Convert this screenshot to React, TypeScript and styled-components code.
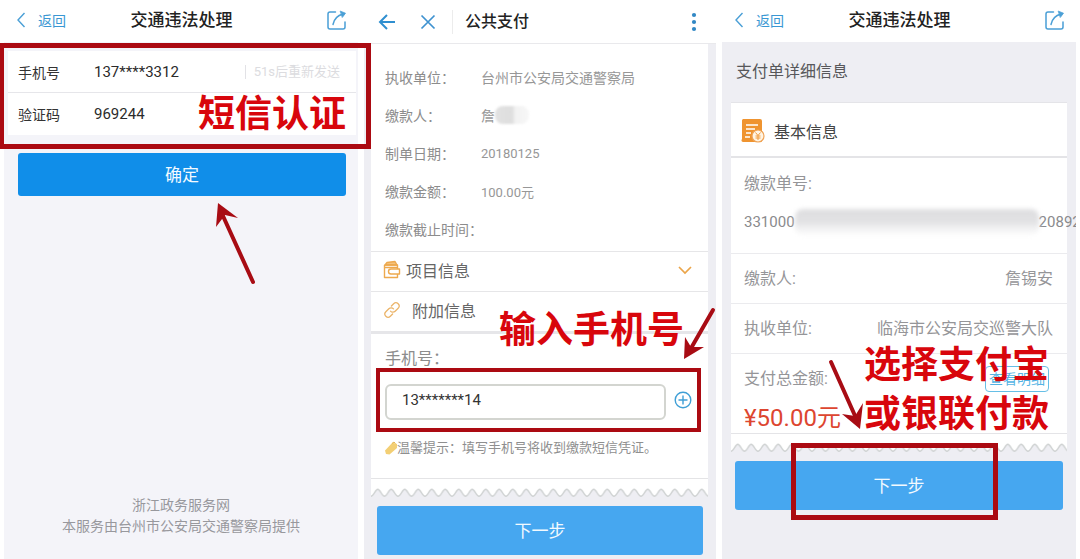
import React from "react";
import styled, { createGlobalStyle } from "styled-components";

const Global = createGlobalStyle`
  *, *::before, *::after { box-sizing: border-box; }
  body {
    margin: 0;
    background: #fff;
    color: #333;
    font-family: Roboto, "Noto Sans CJK SC", sans-serif;
    font-size: 14px;
    overflow-x: hidden;
  }
  button, input { font: inherit; }
  h1, h2, p, dl, dd { margin: 0; font-weight: 400; }
`;

const Page = styled.main`
  display: grid;
  grid-template-columns: minmax(0, 354fr) minmax(0, 352fr) minmax(0, 354fr);
  gap: 6px;
  min-height: 100vh;
  padding: 0 4px;
`;

const Panel = styled.section<{ $bg: string; $clip?: boolean }>`
  position: relative;
  display: flex;
  flex-direction: column;
  background: ${(p) => p.$bg};
  overflow: ${(p) => (p.$clip ? "hidden" : "visible")};
`;

/* Title bars */
const TitleBar = styled.header`
  display: grid;
  grid-template-columns: 1fr auto 1fr;
  align-items: center;
  height: 42px;
  padding: 0 11px 2px 12px;
  background: #fff;
`;

const BarTitle = styled.h1`
  font-size: 17px;
  line-height: 24px;
  font-weight: 500;
  color: #222;
`;

const BackLink = styled.a`
  display: flex;
  align-items: center;
  gap: 10px;
  font-size: 14px;
  color: #3a97d3;
  text-decoration: none;
`;

const IconButton = styled.button`
  display: flex;
  justify-self: end;
  padding: 0;
  border: 0;
  background: none;
  color: #4a9fd6;
`;

const PayBar = styled.header`
  display: flex;
  align-items: center;
  height: 44px;
  padding: 0 18px 0 14px;
  background: #fff;
  border-bottom: 1px solid #e9e9ec;
`;

const PayTitle = styled.h1`
  flex: 1;
  margin-left: 16px;
  padding-left: 12px;
  border-left: 1px solid #ececec;
  font-size: 16px;
  line-height: 24px;
  font-weight: 500;
  color: #222;
`;

const CloseButton = styled(IconButton)`
  margin-left: 24px;
`;

/* SMS form */
const SmsForm = styled.form`
  display: flex;
  flex-direction: column;
  padding-top: 9px;
`;

const FormRow = styled.div<{ $line?: boolean }>`
  display: flex;
  align-items: center;
  height: 42px;
  margin: 0 2px 0 4px;
  padding-left: 10px;
  background: #fff;
  border-bottom: 1px solid ${(p) => (p.$line ? "#e6e6ea" : "#fff")};
`;

const RowLabel = styled.label`
  width: 76px;
  color: #333;
`;

const RowInput = styled.input`
  flex: 1;
  min-width: 0;
  padding: 0;
  border: 0;
  outline: 0;
  background: transparent;
  font-size: 15px;
  color: #2b2b2b;
`;

const Resend = styled.button`
  height: 14px;
  padding: 0 16px 0 8px;
  border: 0;
  border-left: 1px solid #e2e2e6;
  background: none;
  font-size: 13px;
  line-height: 14px;
  color: #dcdce0;
`;

const MainButton = styled.button`
  height: 49px;
  margin: 8px 13px 0;
  padding: 0 0 3px;
  border: 0;
  border-radius: 3px;
  background: #46a7f0;
  font-size: 17px;
  color: #f2faff;
`;

const ConfirmButton = styled(MainButton)`
  height: 43px;
  margin: 18px 12px 0 14px;
  background: #108ee9;
`;

const Footer = styled.footer`
  margin-top: auto;
  padding-bottom: 22px;
  text-align: center;
  line-height: 21px;
  color: #98989d;
`;

/* Payment panel */
const Sheet = styled.div`
  display: flex;
  flex-direction: column;
  margin: 0 8px 0 7px;
  background: #fff;
`;

const Facts = styled.dl`
  padding: 14px 0 3px 14px;
  color: #979797;
`;

const Fact = styled.div`
  display: flex;
  align-items: center;
  height: 38px;
`;

const FactLabel = styled.dt`
  width: 96px;
  white-space: nowrap;
  color: #8c8c8c;
`;

const FactValue = styled.dd<{ $digits?: boolean }>`
  display: flex;
  align-items: center;
  font-size: ${(p) => (p.$digits ? 13 : 14)}px;
`;

const Smudge = styled.span`
  width: 34px;
  height: 18px;
  border-radius: 8px;
  background: linear-gradient(90deg, #e2e2e2, #dedede 50%, #f2f2f2 60%, #f7f7f7);
  filter: blur(1px);
`;

const LongSmudge = styled.span`
  flex: none;
  width: 244px;
  height: 26px;
  border-radius: 8px;
  background: linear-gradient(180deg, #dedee0, #e2e2e4 50%, #f2f2f3 75%, #fbfbfb);
  filter: blur(2px);
`;

const SectionRow = styled.h2<{ $gap: number }>`
  display: flex;
  align-items: center;
  gap: ${(p) => p.$gap}px;
  height: 40px;
  padding: 0 15px 4px 12px;
  border-top: 1px solid #e6e6e8;
  font-size: 16px;
  color: #666;
`;

const Toggle = styled(IconButton)`
  margin-left: auto;
  color: #eba54a;
`;

const PhoneField = styled.div`
  padding: 14px 16px 20px 14px;
  border-top: 3px solid #e6e6e9;
  border-bottom: 1px solid #e4e4e6;
`;

const PhoneLabel = styled.label`
  display: block;
  font-size: 16px;
  line-height: 22px;
  color: #8c8c8c;
`;

const PhoneLine = styled.div`
  display: flex;
  align-items: center;
  gap: 8px;
  margin-top: 14px;
`;

const PhoneInput = styled.input`
  flex: 1;
  min-width: 0;
  height: 36px;
  padding: 0 15px 4px;
  border: 2px solid #d3d5d0;
  border-radius: 6px;
  outline: 0;
  background: #fff;
  font-size: 15px;
  color: #333;
`;

const AddButton = styled(IconButton)`
  padding-bottom: 4px;
`;

const Hint = styled.p`
  display: flex;
  align-items: center;
  margin-top: 18px;
  font-size: 13px;
  line-height: 20px;
  white-space: nowrap;
  color: #8f8f8f;
`;

const WaveGap = styled.div`
  height: 9px;
  background: #fff;
`;

const WaveEdge = styled.div<{ $margin: string }>`
  height: 10px;
  margin: ${(p) => p.$margin};
`;

const WaveBox = styled.svg`
  display: block;
  width: 100%;
  height: 10px;
`;

/* Bill panel */
const BillHeading = styled.h2`
  padding-left: 14px;
  font-size: 16px;
  line-height: 60px;
  color: #57575a;
`;

const BillCard = styled.div`
  display: flex;
  flex-direction: column;
  margin: 0 9px;
  background: #fff;
  border-top: 1px solid #e4e4e8;
`;

const CardHead = styled.h2`
  display: flex;
  align-items: center;
  gap: 9px;
  height: 55px;
  padding: 2px 10px 0;
  border-bottom: 2px solid #e4e4e7;
  font-size: 16px;
  color: #444;
`;

const BillItem = styled.div`
  display: flex;
  justify-content: space-between;
  align-items: center;
  height: 50px;
  padding: 0 14px 4px 13px;
  border-bottom: 1px solid #ebebee;
  font-size: 16px;
  white-space: nowrap;
  color: #959598;
`;

const NumberItem = styled.div`
  padding: 12px 0 17px 13px;
  border-bottom: 1px solid #ebebee;
  color: #959598;
`;

const NumberLabel = styled.div`
  font-size: 16px;
  line-height: 28px;
`;

const NumberValue = styled.div`
  display: flex;
  align-items: center;
  height: 28px;
  margin-top: 10px;
  font-size: 15px;
  color: #8a8a8d;
`;

const TotalItem = styled.div`
  padding: 0 18px 0 13px;
  border-bottom: 1px solid #e4e4e7;
  color: #959598;
`;

const TotalLine = styled.div`
  display: flex;
  justify-content: space-between;
  align-items: center;
  height: 49px;
  padding-bottom: 3px;
  font-size: 16px;
`;

const Amount = styled.div`
  font-size: 24px;
  line-height: 30px;
  color: #dd4630;
`;

const DetailButton = styled.button`
  height: 26px;
  margin-top: 4px;
  padding: 0 3px;
  border: 1px solid #66bfe6;
  border-radius: 4px;
  background: #fff;
  font-size: 14px;
  line-height: 20px;
  color: #55b4e4;
`;

/* Red marks drawn over the screens */
const Frame = styled.div<{ $top: number; $height: number; $left: string; $right: string; $line: number }>`
  position: absolute;
  z-index: 2;
  top: ${(p) => p.$top}px;
  left: ${(p) => p.$left};
  right: ${(p) => p.$right};
  height: ${(p) => p.$height}px;
  border: ${(p) => p.$line}px solid #ab0a12;
  pointer-events: none;
`;

const Note = styled.p<{ $top: number; $right: number }>`
  position: absolute;
  z-index: 2;
  top: ${(p) => p.$top}px;
  right: ${(p) => p.$right}px;
  font-size: 37px;
  line-height: 49px;
  font-weight: 700;
  white-space: nowrap;
  color: #d8060c;
  pointer-events: none;
`;

const ArrowBox = styled.svg<{ $top: number; $right: number }>`
  position: absolute;
  z-index: 3;
  top: ${(p) => p.$top}px;
  right: ${(p) => p.$right}px;
  overflow: visible;
  pointer-events: none;
`;

const BackIcon = () => (
  <svg width="12" height="16" viewBox="0 0 12 16" fill="none" stroke="#4a9fd6" strokeWidth="1.4">
    <path d="M8.500 1 2 8l6.500 7" />
  </svg>
);

const ShareIcon = () => (
  <svg width="20" height="20" viewBox="0 0 20 20" fill="none" stroke="currentColor" strokeWidth="1.500" strokeLinecap="round" strokeLinejoin="round">
    <path d="M8.500 2H3a2 2 0 0 0-2 2v13a2 2 0 0 0 2 2h13a2 2 0 0 0 2-2v-5" />
    <path d="M6 14.500C7 9 10.500 5.500 16 4" />
    <path d="M13.500 1.200 18.500 3.200 15.500 7.200Z" fill="currentColor" strokeWidth=".8" />
  </svg>
);

const WalletIcon = () => (
  <svg width="18" height="20" viewBox="0 0 18 20" fill="none" stroke="#eda94e" strokeWidth="1.400" strokeLinejoin="round">
    <path d="M2 5 4 2.500 12 1.500l2 3.500Z" fill="#f5c27c" />
    <path d="M1.500 5h13v4M14.500 14v3.500h-13V5M1.500 7.500h13" />
    <path d="M16.500 9H8a2.500 2.500 0 0 0 0 5h8.500z" fill="#fff" />
  </svg>
);

const LinkIcon = () => (
  <svg width="18" height="18" viewBox="0 0 24 24" fill="none" stroke="#ebb469" strokeWidth="1.700" strokeLinecap="round">
    <path d="M10 13.500a4.200 4.200 0 0 0 6.200.2l4-4a4.200 4.200 0 0 0-6-6l-3 3" />
    <path d="M14 10.500a4.200 4.200 0 0 0-6.200-.2l-4 4a4.200 4.200 0 0 0 6 6l3-3" />
  </svg>
);

const TicketIcon = () => (
  <svg width="12" height="14" viewBox="0 0 12 14">
    <path d="M0 9.500 7.500 1.500 12 3v4L4.500 13.500 1 13Z" fill="#f3cf74" />
    <path d="M7 2.500 9 1l1.500 1.500" fill="none" stroke="#e6b653" />
  </svg>
);

const BillIcon = () => (
  <svg width="24" height="24" viewBox="0 0 24 24">
    <path d="M2 0h17a2 2 0 0 1 2 2v20a1 1 0 0 1-1 1H2a2 2 0 0 1-1-3V2a2 2 0 0 1 1-2Z" fill="#ef9430" />
    <path d="M5 6h12M5 10h9M5 14h5M4 18h5" stroke="#fff" strokeWidth="1.400" />
    <circle cx="17" cy="17" r="6" fill="#fff4e4" stroke="#efa355" strokeWidth="1.200" />
    <path d="m14.500 13.500 2.500 3 2.500-3M17 16.500V21M14.500 17h5M14.500 19h5" fill="none" stroke="#ef9a3c" />
  </svg>
);

const Wave = ({ id, margin }: { id: string; margin: string }) => (
  <WaveEdge $margin={margin}>
    <WaveBox aria-hidden="true">
      <defs>
        <pattern id={id} width="13.500" height="10" patternUnits="userSpaceOnUse">
          <path d="M0 0H13.500V8.200C11 8.200 9 1.200 6.750 1.200S2.500 8.200 0 8.200Z" fill="#fff" />
          <path d="M-1 8.200H0C2.500 8.200 4.500 1.200 6.750 1.200S11 8.200 13.500 8.200h1" fill="none" stroke="#cfd2d2" strokeWidth="1.400" />
        </pattern>
      </defs>
      <rect width="100%" height="10" fill={`url(#${id})`} />
    </WaveBox>
  </WaveEdge>
);

const SubPageBar = () => (
  <TitleBar>
    <BackLink href="#back">
      <BackIcon />
      返回
    </BackLink>
    <BarTitle>交通违法处理</BarTitle>
    <IconButton type="button" aria-label="分享">
      <ShareIcon />
    </IconButton>
  </TitleBar>
);

const SmsPanel = () => (
  <Panel $bg="#f4f4f9">
    <SubPageBar />
    <SmsForm>
      <FormRow $line>
        <RowLabel htmlFor="sms-phone">手机号</RowLabel>
        <RowInput id="sms-phone" defaultValue="137****3312" />
        <Resend type="button">51s后重新发送</Resend>
      </FormRow>
      <FormRow>
        <RowLabel htmlFor="sms-code">验证码</RowLabel>
        <RowInput id="sms-code" defaultValue="969244" />
      </FormRow>
      <ConfirmButton type="button">确定</ConfirmButton>
    </SmsForm>
    <Footer>
      <p>浙江政务服务网</p>
      <p>本服务由台州市公安局交通警察局提供</p>
    </Footer>
    <Frame $top={43} $height={106} $left="-5px" $right="-13px" $line={5} />
    <Note $top={90} $right={12}>短信认证</Note>
    <ArrowBox $top={203} $right={103} width="40" height="82" viewBox="0 0 40 82">
      <path d="M8 13 38 79" stroke="#a80c14" strokeWidth="4" strokeLinecap="round" />
      <path d="M3 0 23 15 10 12 1 24Z" fill="#a80c14" />
    </ArrowBox>
  </Panel>
);

const PayPanel = () => (
  <Panel $bg="#eeeef3">
    <PayBar>
      <IconButton type="button" aria-label="后退">
        <svg width="18" height="16" viewBox="0 0 18 16" fill="none" stroke="#2f8fd0" strokeWidth="2">
          <path d="M17 8H2M9 1 2 8l7 7" />
        </svg>
      </IconButton>
      <CloseButton type="button" aria-label="关闭">
        <svg width="16" height="16" viewBox="0 0 16 16" fill="none" stroke="#3f92d0" strokeWidth="1.700">
          <path d="m1.500 1.500 13 13M14.500 1.500l-13 13" />
        </svg>
      </CloseButton>
      <PayTitle>公共支付</PayTitle>
      <IconButton type="button" aria-label="更多">
        <svg width="8" height="20" viewBox="0 0 8 20" fill="#3187c4">
          <circle cx="4" cy="3" r="2.100" />
          <circle cx="4" cy="10" r="2.100" />
          <circle cx="4" cy="17" r="2.100" />
        </svg>
      </IconButton>
    </PayBar>
    <Sheet>
      <Facts>
        <Fact>
          <FactLabel>执收单位：</FactLabel>
          <FactValue>台州市公安局交通警察局</FactValue>
        </Fact>
        <Fact>
          <FactLabel>缴款人：</FactLabel>
          <FactValue>
            詹<Smudge />
          </FactValue>
        </Fact>
        <Fact>
          <FactLabel>制单日期：</FactLabel>
          <FactValue $digits>20180125</FactValue>
        </Fact>
        <Fact>
          <FactLabel>缴款金额：</FactLabel>
          <FactValue $digits>100.00元</FactValue>
        </Fact>
        <Fact>
          <FactLabel>缴款截止时间：</FactLabel>
        </Fact>
      </Facts>
      <SectionRow $gap={5}>
        <WalletIcon />
        项目信息
        <Toggle type="button" aria-label="展开">
          <svg width="16" height="10" viewBox="0 0 16 10" fill="none" stroke="currentColor" strokeWidth="1.700">
            <path d="m2 2 6 6 6-6" />
          </svg>
        </Toggle>
      </SectionRow>
      <SectionRow $gap={11}>
        <LinkIcon />
        附加信息
      </SectionRow>
      <PhoneField>
        <PhoneLabel htmlFor="pay-phone">手机号：</PhoneLabel>
        <PhoneLine>
          <PhoneInput id="pay-phone" defaultValue="13*******14" />
          <AddButton type="button" aria-label="添加">
            <svg width="18" height="18" viewBox="0 0 18 18" fill="none" stroke="#3f9fd6" strokeWidth="1.400">
              <circle cx="9" cy="9" r="7.800" />
              <path d="M9 4.500v9M4.500 9h9" />
            </svg>
          </AddButton>
        </PhoneLine>
        <Hint>
          <TicketIcon />
          温馨提示：填写手机号将收到缴款短信凭证。
        </Hint>
      </PhoneField>
      <WaveGap />
    </Sheet>
    <Wave id="wave-pay" margin="0 8px 0 7px" />
    <MainButton type="button">下一步</MainButton>
    <Frame $top={368} $height={64} $left="12px" $right="15px" $line={4} />
    <Note $top={306} $right={32}>输入手机号</Note>
    <ArrowBox $top={306} $right={0} width="34" height="54" viewBox="0 0 34 54">
      <path d="M31 4 8 44" stroke="#a80c14" strokeWidth="4" strokeLinecap="round" />
      <path d="M2 53 3 31 9 41 22 41Z" fill="#a80c14" />
    </ArrowBox>
  </Panel>
);

const BillPanel = () => (
  <Panel $bg="#eeeef3" $clip>
    <SubPageBar />
    <BillHeading>支付单详细信息</BillHeading>
    <BillCard>
      <CardHead>
        <BillIcon />
        基本信息
      </CardHead>
      <NumberItem>
        <NumberLabel>缴款单号:</NumberLabel>
        <NumberValue>
          331000
          <LongSmudge />
          20892
        </NumberValue>
      </NumberItem>
      <BillItem>
        <span>缴款人:</span>
        <span>詹锡安</span>
      </BillItem>
      <BillItem>
        <span>执收单位:</span>
        <span>临海市公安局交巡警大队</span>
      </BillItem>
      <TotalItem>
        <TotalLine>
          <span>支付总金额:</span>
          <DetailButton type="button">查看明细</DetailButton>
        </TotalLine>
        <Amount>¥50.00元</Amount>
      </TotalItem>
      <WaveGap />
    </BillCard>
    <Wave id="wave-bill" margin="0 9px" />
    <MainButton type="button">下一步</MainButton>
    <Frame $top={443} $height={77} $left="69px" $right="78px" $line={5} />
    <Note $top={341} $right={27}>
      选择支付宝
      <br />
      或银联付款
    </Note>
    <ArrowBox $top={358} $right={211} width="38" height="72" viewBox="0 0 38 72">
      <path d="M4 4 29 60" stroke="#a80c14" strokeWidth="4" strokeLinecap="round" />
      <path d="M33 71 15 56 28 58 36 45Z" fill="#a80c14" />
    </ArrowBox>
  </Panel>
);

export default function App() {
  return (
    <>
      <Global />
      <Page>
        <SmsPanel />
        <PayPanel />
        <BillPanel />
      </Page>
    </>
  );
}
